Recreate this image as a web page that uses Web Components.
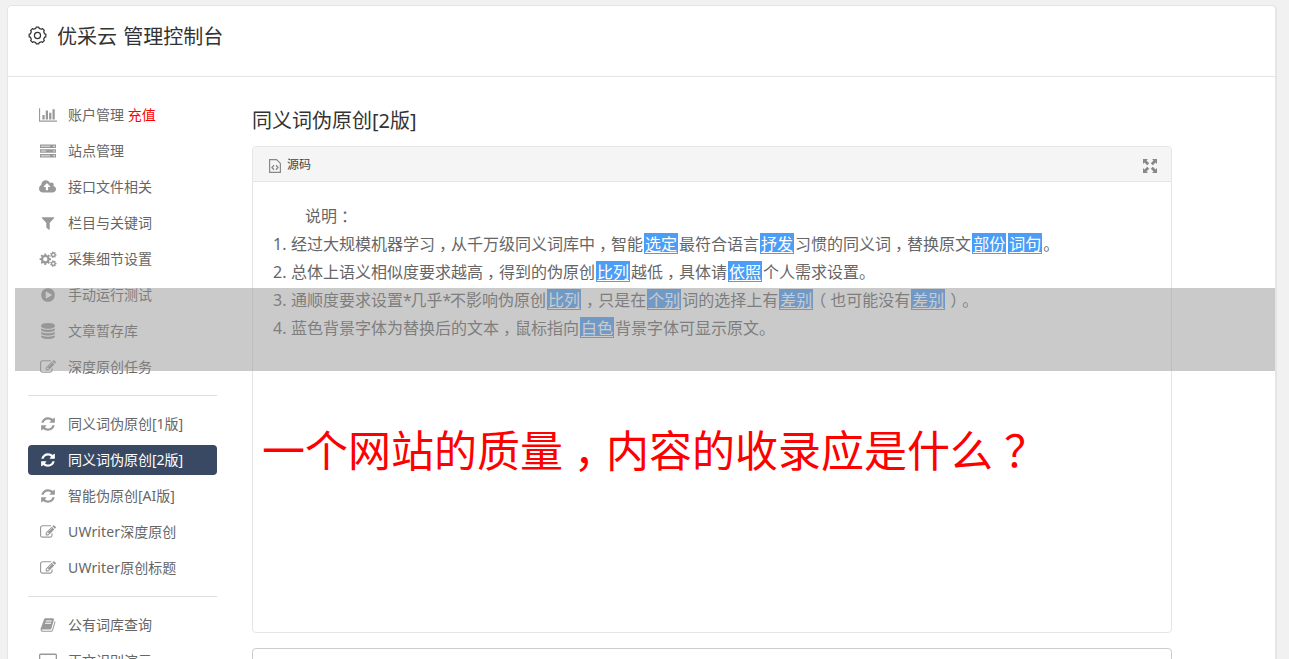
<!DOCTYPE html>
<html lang="zh-CN">
<head>
<meta charset="utf-8">
<title>优采云 管理控制台</title>
<style>
    html, body {
        margin: 0;
        height: 100%;
        overflow: hidden;
    }
    body {
        background: #f1f1f1;
        color: #666;
        font: 14px "Noto Sans", "Noto Sans CJK SC", sans-serif;
        text-spacing-trim: space-all;
    }
</style>
</head>
<body>
<console-page>
    <page-header slot="header">优采云 管理控制台</page-header>

    <side-nav slot="nav">
        <nav-item icon="chart">账户管理 <span style="color:#f00">充值</span></nav-item>
        <nav-item icon="server">站点管理</nav-item>
        <nav-item icon="upload">接口文件相关</nav-item>
        <nav-item icon="filter">栏目与关键词</nav-item>
        <nav-item icon="cogs">采集细节设置</nav-item>
        <nav-item icon="play">手动运行测试</nav-item>
        <nav-item icon="database">文章暂存库</nav-item>
        <nav-item icon="edit">深度原创任务</nav-item>
        <nav-divider></nav-divider>
        <nav-item icon="refresh">同义词伪原创[1版]</nav-item>
        <nav-item icon="refresh" active>同义词伪原创[2版]</nav-item>
        <nav-item icon="refresh">智能伪原创[AI版]</nav-item>
        <nav-item icon="edit"><span style="letter-spacing:.15px">UWriter</span>深度原创</nav-item>
        <nav-item icon="edit"><span style="letter-spacing:.15px">UWriter</span>原创标题</nav-item>
        <nav-divider></nav-divider>
        <nav-item icon="book">公有词库查询</nav-item>
        <nav-item icon="desktop">正文识别演示</nav-item>
    </side-nav>

    <span slot="title">同义词伪原创[2版]</span>
    <editor-panel slot="content">
        <note-line indent>说明<wide-mark>：</wide-mark></note-line>
        <note-line num="1.">经过大规模机器学习<wide-mark>，</wide-mark>从千万级同义词库中<wide-mark>，</wide-mark>智能<syn-word>选定</syn-word>最符合语言<syn-word>抒发</syn-word>习惯的同义词<wide-mark>，</wide-mark>替换原文<syn-word>部份</syn-word><syn-word>词句</syn-word>。</note-line>
        <note-line num="2.">总体上语义相似度要求越高<wide-mark>，</wide-mark>得到的伪原创<syn-word>比列</syn-word>越低<wide-mark>，</wide-mark>具体请<syn-word>依照</syn-word>个人需求设置。</note-line>
        <note-line num="3.">通顺度要求设置<span style="letter-spacing:-1.3px">*</span>几乎<span style="letter-spacing:-1.3px">*</span>不影响伪原创<syn-word>比列</syn-word><wide-mark>，</wide-mark>只是在<syn-word>个别</syn-word>词的选择上有<syn-word>差别</syn-word><wide-mark>（</wide-mark>也可能没有<syn-word>差别</syn-word><wide-mark>）</wide-mark>。</note-line>
        <note-line num="4.">蓝色背景字体为替换后的文本<wide-mark>，</wide-mark>鼠标指向<syn-word>白色</syn-word>背景字体可显示原文。</note-line>
    </editor-panel>

    <caption-text slot="overlay">一个网站的质量<wide-mark>，</wide-mark>内容的收录应是什么<span style="padding-left:.26em">？</span></caption-text>
</console-page>

<script>
// Points of a cog with square teeth
function teethPath(cx, cy, r, teeth, depth) {
    const pts = [];
    const step = Math.PI * 2 / teeth;
    for (let i = 0; i < teeth; i++) {
        const a = i * step;
        [[-0.3, depth], [-0.2, 1], [0.2, 1], [0.3, depth]].forEach(([o, k]) => {
            const t = a + o * step;
            pts.push((cx + Math.cos(t) * r * k).toFixed(2) + ' ' + (cy + Math.sin(t) * r * k).toFixed(2));
        });
    }
    return `M${pts.join('L')}Z`;
}

// Filled cog with a centre hole
function cog(cx, cy, r, teeth, hole) {
    return teethPath(cx, cy, r, teeth, 0.76) +
        `M${cx - hole} ${cy}a${hole} ${hole} 0 1 0 ${hole * 2} 0a${hole} ${hole} 0 1 0 ${-hole * 2} 0Z`;
}

const icons = {
    chart: ['0 0 2048 1792', 18, '<path d="M640 896v512h-256v-512h256zm384-512v1024h-256v-1024h256zm1024 1152v128h-2048v-1536h128v1408h1920zm-640-896v768h-256v-768h256zm384-384v1152h-256v-1152h256z"/>'],
    server: ['0 0 16 14', 16, '<path fill-rule="evenodd" d="M0 .5h16v3.6H0zM1 1.7v1.2h9V1.7zM13.5 1.7v1.2h1.2V1.7zM0 5.2h16v3.6H0zM1 6.4v1.2h5V6.4zM13.5 6.4v1.2h1.2V6.4zM0 9.9h16v3.6H0zM1 11.1v1.2h9v-1.2zM13.5 11.1v1.2h1.2v-1.2z"/><path opacity=".5" d="M1 1.7h9v1.2H1zM1 6.4h5v1.2H1zM1 11.1h9v1.2H1z"/>'],
    upload: ['0 0 1920 1792', 17, '<path d="M1280 864q0-14-9-23l-352-352q-9-9-23-9t-23 9l-351 351q-10 12-10 24 0 14 9 23t23 9h224v352q0 13 9.5 22.5t22.5 9.5h192q13 0 22.5-9.5t9.5-22.5v-352h224q13 0 22.5-9.5t9.5-22.5zm640 288q0 159-112.5 271.5t-271.5 112.5h-1088q-185 0-316.5-131.5t-131.5-316.5q0-130 70-240t188-165q-2-30-2-43 0-212 150-362t362-150q156 0 285.5 87t188.5 231q71-62 166-62 106 0 181 75t75 181q0 76-41 138 130 31 213.5 135.5t83.5 238.5z"/>'],
    filter: ['0 0 1792 1792', 16, '<path d="M1595 295q17 41-14 70l-493 493v742q0 42-39 59-13 5-25 5-27 0-45-19l-256-256q-19-19-19-45v-486l-493-493q-31-29-14-70 17-39 59-39h1280q42 0 59 39z"/>'],
    cogs: ['0 0 18 16', 18, `<path fill-rule="evenodd" d="${cog(6.3, 8.2, 5.8, 8, 2.1)}${cog(14.3, 3.8, 3.3, 7, 1.1)}${cog(14.3, 12.6, 3.3, 7, 1.1)}"/>`],
    play: ['0 0 1792 1792', 16, '<path d="M896 128q209 0 385.5 103t279.5 279.5 103 385.5-103 385.5-279.5 279.5-385.5 103-385.5-103-279.5-279.5-103-385.5 103-385.5 279.5-279.5 385.5-103zm384 823q32-18 32-55t-32-55l-544-320q-31-19-64-1-32 19-32 56v640q0 37 32 56 16 8 32 8 17 0 32-9z"/>'],
    database: ['0 0 1792 1792', 16, '<path d="M896 768q237 0 443-43t325-127v170q0 69-103 128t-280 93.5-385 34.5-385-34.5-280-93.5-103-128v-170q119 84 325 127t443 43zm0 768q237 0 443-43t325-127v170q0 69-103 128t-280 93.5-385 34.5-385-34.5-280-93.5-103-128v-170q119 84 325 127t443 43zm0-384q237 0 443-43t325-127v170q0 69-103 128t-280 93.5-385 34.5-385-34.5-280-93.5-103-128v-170q119 84 325 127t443 43zm0-1152q208 0 385 34.5t280 93.5 103 128v128q0 69-103 128t-280 93.5-385 34.5-385-34.5-280-93.5-103-128v-128q0-69 103-128t280-93.5 385-34.5z"/>'],
    edit: ['0 0 1792 1792', 16, '<path d="M888 1184l116-116-152-152-116 116v56h96v96h56zm440-720q-16-16-33 1l-350 350q-17 17-1 33t33-1l350-350q17-17 1-33zm80 594v190q0 119-84.5 203.5t-203.5 84.5h-832q-119 0-203.5-84.5t-84.5-203.5v-832q0-119 84.5-203.5t203.5-84.5h832q63 0 117 25 15 7 18 23 3 17-9 29l-49 49q-14 14-32 8-23-6-45-6h-832q-66 0-113 47t-47 113v832q0 66 47 113t113 47h832q66 0 113-47t47-113v-126q0-13 9-22l64-64q15-15 35-7t20 29zm-96-738l288 288-672 672h-288v-288zm444 132l-92 92-288-288 92-92q28-28 68-28t68 28l152 152q28 28 28 68t-28 68z"/>'],
    refresh: ['0 0 1792 1792', 16, '<path d="M1639 1056q0 5-1 7-64 268-268 434.5t-478 166.5q-146 0-282.5-55t-243.5-157l-129 129q-19 19-45 19t-45-19-19-45v-448q0-26 19-45t45-19h448q26 0 45 19t19 45-19 45l-137 137q71 66 161 102t187 36q134 0 250-65t186-179q11-17 53-117 8-23 30-23h192q13 0 22.5 9.5t9.5 22.5zm25-800v448q0 26-19 45t-45 19h-448q-26 0-45-19t-19-45 19-45l138-138q-148-137-349-137-134 0-250 65t-186 179q-11 17-53 117-8 23-30 23h-199q-13 0-22.5-9.5t-9.5-22.5v-7q65-268 270-434.5t480-166.5q146 0 284 55.5t245 156.5l130-129q19-19 45-19t45 19 19 45z"/>'],
    book: ['0 0 1792 1792', 16, '<path d="M1703 478q40 57 18 129l-275 906q-19 64-76.5 107.5t-122.5 43.5h-923q-77 0-148.5-53.5t-99.5-131.5q-24-67-2-127 0-4 3-27t4-37q1-8-3-21.5t-3-19.5q2-11 8-21t16.5-23.5 16.5-23.5q23-38 45-91.5t30-91.5q3-10 .5-30t-.5-28q3-11 17-28t17-23q21-36 42-92t25-90q1-9-2.5-32t.5-28q4-13 22-30.5t22-22.5q19-26 42.5-84.5t27.5-96.5q1-8-3-25.5t-2-26.5q2-8 9-18t18-23 17-21q8-12 16.5-30.5t15-35 16-36 19.5-32 26.5-23.5 36-11.5 47.5 5.5l-1 3q38-9 51-9h761q74 0 114 56t18 130l-274 906q-36 119-71.5 153.5t-128.5 34.5h-869q-27 0-38 15-11 16-1 43 24 70 144 70h923q29 0 56-15.5t35-41.5l300-987q7-22 5-57 38 15 59 43zm-1064 2q-4 13 2 22.5t20 9.5h608q13 0 25.5-9.5t16.5-22.5l21-64q4-13-2-22.5t-20-9.5h-608q-13 0-25.5 9.5t-16.5 22.5zm-83 256q-4 13 2 22.5t20 9.5h608q13 0 25.5-9.5t16.5-22.5l21-64q4-13-2-22.5t-20-9.5h-608q-13 0-25.5 9.5t-16.5 22.5z"/>'],
    desktop: ['0 0 18 16', 18, '<path fill-rule="evenodd" d="M1.5 .5h15q1.5 0 1.5 1.5v9.5q0 1.5-1.5 1.5h-5v2h-5v-2h-5Q0 13 0 11.500V2Q0 .5 1.5 .5zM1.300 2v8h15.400V2z"/>'],
    gear: ['0 0 20 20', 19, `<g fill="none" stroke="currentColor" stroke-width="1.3" stroke-linejoin="round"><path d="${teethPath(10, 10, 8.9, 8, 0.86)}"/><circle cx="10" cy="10" r="3.2"/></g>`],
    source: ['0 0 12 14', 12, '<g fill="none" stroke="currentColor"><path d="M.6 .6h7l3.800 3.800v9H.6z" stroke-width="1.2"/><path d="M5 6.300L3 8.500l2 2.200M7 6.300l2 2.200-2 2.200" stroke-width="1.3"/></g>'],
    expand: ['0 0 14 14', 14, '<path d="M0 0h5L3.500 1.500l2.700 2.700-2 2L1.500 3.500 0 5zM14 0v5l-1.500-1.500-2.700 2.700-2-2 2.700-2.700L9 0zM0 14V9l1.500 1.500 2.700-2.700 2 2-2.700 2.700L5 14zM14 14H9l1.500-1.500-2.700-2.700 2-2 2.700 2.700L14 9z"/>']
};

class BaseElement extends HTMLElement {
    constructor() {
        super();
        this.attachShadow({ mode: 'open' });
    }

    connectedCallback() {
        this.shadowRoot.innerHTML = this.render();
    }
}

customElements.define('ui-icon', class extends BaseElement {
    render() {
        const [box, width, shape] = icons[this.getAttribute('name')];
        const [, , w, h] = box.split(' ');
        return `
            <style>
                :host { display: inline-flex; flex: none; }
                svg { display: block; fill: currentColor; }
            </style>
            <svg viewBox="${box}" width="${width}" height="${width * h / w}">${shape}</svg>
        `;
    }
});

customElements.define('page-header', class extends BaseElement {
    render() {
        return `
            <style>
                :host {
                    display: flex;
                    align-items: center;
                    box-sizing: border-box;
                    height: 71px;
                    padding: 0 0 8px 20px;
                    border-bottom: 1px solid #e5e5e5;
                    color: #333;
                    font-size: 20px;
                    line-height: 30px;
                    word-spacing: 1px;
                }
                ui-icon { margin-right: 10px; padding-bottom: 3px; }
            </style>
            <ui-icon name="gear"></ui-icon><span><slot></slot></span>
        `;
    }
});

customElements.define('side-nav', class extends BaseElement {
    render() {
        return `
            <style>
                :host { display: flex; flex-direction: column; gap: 6px; width: 189px; }
            </style>
            <slot></slot>
        `;
    }
});

customElements.define('nav-item', class extends BaseElement {
    render() {
        return `
            <style>
                :host {
                    display: flex;
                    flex: none;
                    align-items: center;
                    height: 30px;
                    border-radius: 4px;
                    line-height: 30px;
                    white-space: nowrap;
                }
                :host([active]) { background: #394963; color: #fff; }
                .icon {
                    display: flex;
                    justify-content: center;
                    width: 39px;
                    padding-right: 1px;
                    color: #999;
                }
                :host([active]) .icon { color: #fff; }
            </style>
            <span class="icon"><ui-icon name="${this.getAttribute('icon')}"></ui-icon></span>
            <span><slot></slot></span>
        `;
    }
});

customElements.define('nav-divider', class extends BaseElement {
    render() {
        return `
            <style>
                :host { display: block; flex: none; height: 1px; margin: 7px 0; background: #ddd; }
            </style>
        `;
    }
});

// Replaced synonym with its blue background
customElements.define('syn-word', class extends BaseElement {
    render() {
        return `
            <style>
                :host {
                    display: inline-block;
                    height: 21px;
                    margin: 3px 1px 0;
                    padding: 0 1px;
                    background: #4b9df5;
                    color: #fff;
                    line-height: 22px;
                    vertical-align: top;
                }
                u { text-underline-offset: 2px; text-decoration-thickness: 1px; }
            </style>
            <u><slot></slot></u>
        `;
    }
});

// Full-width punctuation, centred in its cell
customElements.define('wide-mark', class extends BaseElement {
    render() {
        return `
            <style>
                :host {
                    display: inline-block;
                    width: 1em;
                    font-family: "Noto Sans CJK SC", sans-serif;
                    font-feature-settings: "halt";
                    line-height: 1;
                    text-align: center;
                }
            </style>
            <slot></slot>
        `;
    }
});

customElements.define('note-line', class extends BaseElement {
    render() {
        return `
            <style>
                :host { display: flex; height: 28px; font-size: 16px; line-height: 28px; white-space: nowrap; }
                :host([indent]) { padding-left: 14px; }
                b { width: 18px; font-weight: normal; }
            </style>
            <b>${this.getAttribute('num') || ''}</b><span><slot></slot></span>
        `;
    }
});

customElements.define('editor-panel', class extends BaseElement {
    render() {
        return `
            <style>
                :host {
                    display: flex;
                    flex-direction: column;
                    box-sizing: border-box;
                    width: 920px;
                    height: 487px;
                    border: 1px solid #e5e5e5;
                    border-radius: 4px;
                }
                header {
                    display: flex;
                    align-items: center;
                    height: 34px;
                    padding: 0 14px 0 16px;
                    border-bottom: 1px solid #e5e5e5;
                    border-radius: 4px 4px 0 0;
                    background: #f5f5f5;
                    color: #444;
                    font-size: 12px;
                }
                ui-icon { padding-top: 4px; color: #888; }
                header span { flex: 1; padding-left: 6px; }
                main { padding: 20px 20px; }
            </style>
            <header><ui-icon name="source"></ui-icon><span>源码</span><ui-icon name="expand"></ui-icon></header>
            <main><slot></slot></main>
        `;
    }
});

// Translucent band with the large caption below it, laid over the page
customElements.define('caption-text', class extends BaseElement {
    render() {
        return `
            <style>
                :host { position: absolute; top: 288px; left: 15px; width: 1260px; }
                .band { height: 83px; background: rgba(149, 149, 149, .5); }
                .text {
                    padding: 48px 0 0 247px;
                    color: #f00;
                    font-size: 43px;
                    line-height: 64px;
                    white-space: nowrap;
                }
            </style>
            <div class="band"></div>
            <div class="text"><slot></slot></div>
        `;
    }
});

customElements.define('console-page', class extends BaseElement {
    render() {
        return `
            <style>
                :host { display: block; height: 100%; overflow: hidden; }
                .card {
                    box-sizing: border-box;
                    width: 1270px;
                    height: calc(100% - 5px);
                    margin: 5px 0 0 7px;
                    border: 1px solid #e5e5e5;
                    border-width: 1px 2px 0 1px;
                    border-radius: 5px 5px 0 0;
                    background: #fff;
                    overflow: hidden;
                }
                .body { display: flex; gap: 35px; padding: 23px 20px 0; }
                h2 {
                    margin: 0 0 9px;
                    color: #333;
                    font-size: 20px;
                    font-weight: normal;
                    line-height: 32px;
                }
                section { padding-top: 5px; }
                .next { height: 60px; margin-top: 15px; border: 1px solid #ccc; border-radius: 4px; }
            </style>
            <div class="card">
                <slot name="header"></slot>
                <div class="body">
                    <slot name="nav"></slot>
                    <section>
                        <h2><slot name="title"></slot></h2>
                        <slot name="content"></slot>
                        <div class="next"></div>
                    </section>
                </div>
            </div>
            <slot name="overlay"></slot>
        `;
    }
});
</script>
</body>
</html>
